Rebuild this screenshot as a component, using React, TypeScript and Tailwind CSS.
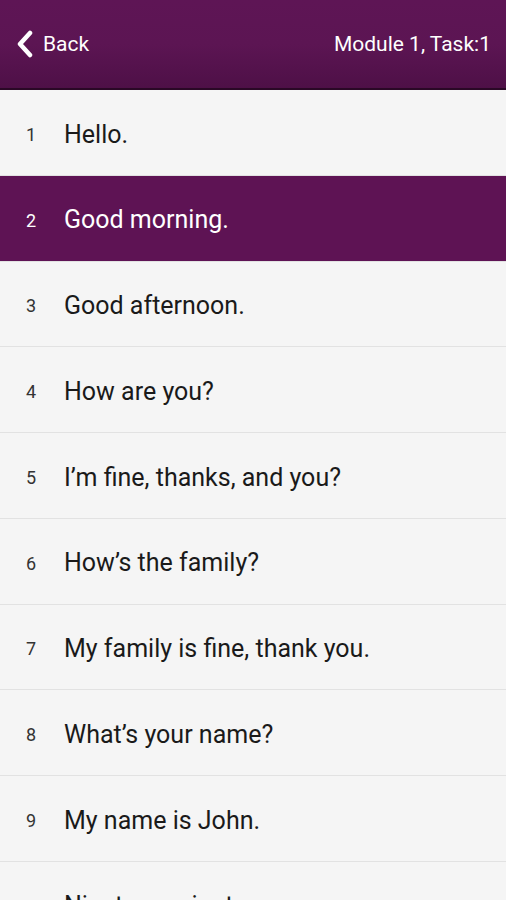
const phrases = [
  'Hello.',
  'Good morning.',
  'Good afternoon.',
  'How are you?',
  'I’m fine, thanks, and you?',
  'How’s the family?',
  'My family is fine, thank you.',
  'What’s your name?',
  'My name is John.',
  'Nineteen minutes.',
];

export default function App() {
  return (
    <div className="h-[900px] overflow-hidden bg-[#f5f5f5]" style={{ fontFamily: 'Roboto, "Noto Sans", sans-serif' }}>
      {/* Header */}
      <div className="h-[90px] flex items-center justify-between pl-[15px] pr-[15px] bg-gradient-to-b from-[#5e1555] via-[#5c1553] to-[#4e1047] border-b-2 border-[#2a0826]">
        <div className="flex items-center gap-[9px] text-white">
          <svg width="19" height="28" viewBox="0 0 19 28" fill="none">
            <path d="M15 3 L5 14 L15 25" stroke="white" strokeWidth="4.5" strokeLinecap="round" strokeLinejoin="round" />
          </svg>
          <span className="text-[21px] leading-none">Back</span>
        </div>
        <span className="text-white text-[21px] leading-none">Module 1, Task:1</span>
      </div>

      {/* List */}
      <div>
        {phrases.map((p, i) => {
          const active = i === 1;
          return (
            <div
              key={i}
              className={`h-[85.75px] flex items-center pt-[4px] border-b border-[#e2e2e2] ${active ? 'bg-[#5e1354]' : ''}`}
            >
              <div className={`w-[64px] shrink-0 text-[18px] ${i >= 9 ? 'pl-[18px]' : 'pl-[26px]'} ${active ? 'text-white' : 'text-[#333]'}`}>
                {i + 1}
              </div>
              <span className={`text-[25px] ${active ? 'text-white' : 'text-[#1a1a1a]'}`}>{p}</span>
            </div>
          );
        })}
      </div>
    </div>
  );
}
